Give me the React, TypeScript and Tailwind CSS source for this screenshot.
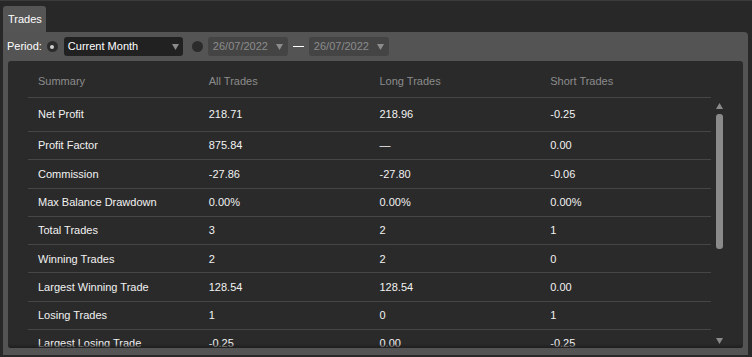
import { useState } from 'react';

type Row = { label: string; all: string; long: string; short: string };

const rows: Row[] = [
  { label: 'Net Profit', all: '218.71', long: '218.96', short: '-0.25' },
  { label: 'Profit Factor', all: '875.84', long: '—', short: '0.00' },
  { label: 'Commission', all: '-27.86', long: '-27.80', short: '-0.06' },
  { label: 'Max Balance Drawdown', all: '0.00%', long: '0.00%', short: '0.00%' },
  { label: 'Total Trades', all: '3', long: '2', short: '1' },
  { label: 'Winning Trades', all: '2', long: '2', short: '0' },
  { label: 'Largest Winning Trade', all: '128.54', long: '128.54', short: '0.00' },
  { label: 'Losing Trades', all: '1', long: '0', short: '1' },
  { label: 'Largest Losing Trade', all: '-0.25', long: '0.00', short: '-0.25' },
];

function Caret({ color = '#8a8a8a' }: { color?: string }) {
  return (
    <svg width="7" height="6" viewBox="0 0 7 6" className="shrink-0">
      <path d="M0 0 H7 L3.5 6 Z" fill={color} />
    </svg>
  );
}

function DateBox({ value }: { value: string }) {
  return (
    <div className="flex items-center justify-between w-[80px] h-[19px] bg-[#444444] rounded-[3px] pl-[5px] pr-[5px] text-[#8c8c8c]">
      <span>{value}</span>
      <Caret color="#8c8c8c" />
    </div>
  );
}

export default function App() {
  const [mode, setMode] = useState<'period' | 'range'>('period');

  return (
    <div
      className="w-[752px] h-[357px] overflow-hidden bg-[#282828] border-t border-[#3b3b3b] text-[11px] text-[#f2f2f2]"
      style={{ fontFamily: '"Liberation Sans", Arial, sans-serif' }}
    >
      <div className="pt-[5px] pl-[3px]">
        {/* 标签页 */}
        <div className="w-[43px] h-[26px] bg-[#555555] rounded-t-[3px] flex items-center pl-[5px] text-white">
          Trades
        </div>

        {/* 面板 */}
        <div className="w-[745px] h-[323px] bg-[#545454] rounded-tr-[4px] px-[5px] flex flex-col">
          {/* 周期选择 */}
          <div className="h-[29px] shrink-0 pt-[5px] flex items-start">
            <div className="h-[19px] flex items-center">
              <span className="text-white mr-[5px] ml-[-1px]">Period:</span>
              <button
                onClick={() => setMode('period')}
                className="w-[11px] h-[11px] rounded-full bg-[#2b2b2b] flex items-center justify-center mr-[6px]"
              >
                {mode === 'period' && <span className="w-[4px] h-[4px] rounded-full bg-[#d0d0d0]" />}
              </button>
              <div className="flex items-center justify-between w-[119px] h-[19px] bg-[#212121] rounded-[3px] pl-[4px] pr-[4px] text-white">
                <span>Current Month</span>
                <Caret />
              </div>
              <button
                onClick={() => setMode('range')}
                className="w-[11px] h-[11px] rounded-full bg-[#2b2b2b] flex items-center justify-center ml-[9px] mr-[5px]"
              >
                {mode === 'range' && <span className="w-[4px] h-[4px] rounded-full bg-[#d0d0d0]" />}
              </button>
              <DateBox value="26/07/2022" />
              <span className="w-[11px] h-[1.5px] bg-white mx-[5px]" />
              <DateBox value="26/07/2022" />
            </div>
          </div>

          {/* 统计表 */}
          <div className="relative w-[735px] h-[287px] shrink-0 bg-[#2a2a2a] rounded-[3px] overflow-hidden flex">
            <div className="w-[683px] ml-[20px] flex flex-col">
              <div className="grid grid-cols-4 h-[37px] shrink-0 pt-[4px] items-center border-b border-[#464646] text-[#8c8c8c]">
                <span className="pl-[10px]">Summary</span>
                <span className="pl-[10px]">All Trades</span>
                <span className="pl-[10px]">Long Trades</span>
                <span className="pl-[10px]">Short Trades</span>
              </div>
              {rows.map((r, i) => (
                <div
                  key={r.label}
                  className={`grid grid-cols-4 items-center border-b border-[#464646] shrink-0 ${
                    i === 0 ? 'h-[34px]' : 'h-[28.3px]'
                  }`}
                >
                  <span className="pl-[10px]">{r.label}</span>
                  <span className="pl-[10px]">{r.all}</span>
                  <span className="pl-[10px]">{r.long}</span>
                  <span className="pl-[10px]">{r.short}</span>
                </div>
              ))}
            </div>

            {/* 滚动条 */}
            <div className="w-[7px] ml-[5px] flex flex-col items-center pt-[42px]">
              <svg width="7" height="6" viewBox="0 0 7 6">
                <path d="M3.5 0 L7 6 H0 Z" fill="#8a8a8a" />
              </svg>
              <div className="w-[7px] h-[135px] mt-[5px] bg-[#8a8a8a] rounded-[3px]" />
              <div className="mt-auto mb-[4px]">
                <Caret />
              </div>
            </div>

            <div className="absolute left-0 right-0 bottom-0 h-[4px] bg-gradient-to-b from-transparent to-[#1e1e1e]" />
          </div>
        </div>
      </div>
    </div>
  );
}
